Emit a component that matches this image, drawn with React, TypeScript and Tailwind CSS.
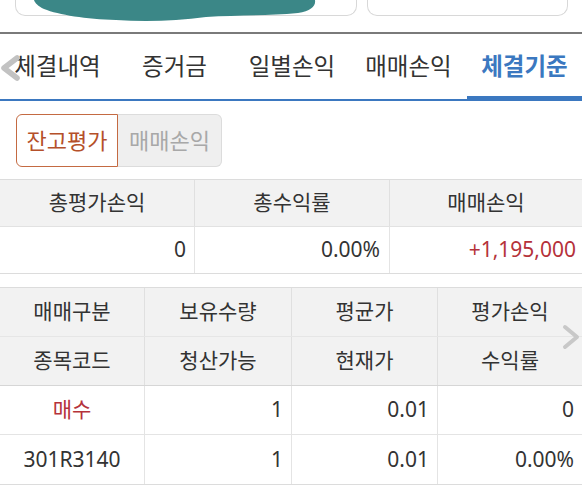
const FONT = { fontFamily: '"Noto Sans", "Noto Sans CJK KR", sans-serif' };

const tabs = [
  { label: '체결내역', w: 'w-[115px]' },
  { label: '증거금', w: 'w-[119px]' },
  { label: '일별손익', w: 'w-[116px]' },
  { label: '매매손익', w: 'w-[117px]' },
  { label: '체결기준', w: 'w-[115px]', active: true },
];

const cols2 = ['w-[145px]', 'w-[147px]', 'w-[146px]', 'flex-1'];

export default function App() {
  return (
    <div className="w-[582px] h-[487px] bg-white overflow-hidden text-[#333]" style={FONT}>
      {/* Top cards (cut off) */}
      <div className="h-[34px] border-b-2 border-[#7a7a7a] flex pl-[15px] gap-[10px]">
        <div className="relative w-[342px] h-[16px] border border-t-0 border-[#d8d8d8] rounded-b-[10px]">
          <svg className="absolute left-[18px] top-0" width="282" height="23" viewBox="0 0 282 23">
            <path
              d="M0 0 H281 C282 6 277 11 264 13 C232 16 202 15 172 17 C142 21 112 22 82 20 C52 19 25 15 10 9 C4 6 1 3 0 0 Z"
              fill="#3b8787"
            />
          </svg>
        </div>
        <div className="w-[201px] h-[16px] border border-t-0 border-[#d8d8d8] rounded-b-[10px]" />
      </div>

      {/* Tabs */}
      <div className="relative flex h-[67px] border-b-2 border-[#3b78c0]">
        {tabs.map((t) => (
          <div
            key={t.label}
            className={`${t.w} relative flex items-center justify-center text-[23.5px] ${
              t.active ? 'text-[#3b78c0] font-bold' : 'text-[#333]'
            }`}
          >
            <span className="relative">{t.label}</span>
            {t.active && <div className="absolute left-0 right-0 bottom-0 h-[3px] bg-[#3b78c0]" />}
          </div>
        ))}
        <svg className="absolute left-0 top-[21px]" width="22" height="26" viewBox="0 0 22 26">
          <polyline points="17,3 4,13 17,23" fill="none" stroke="#c2c2c2" strokeWidth="5.5" strokeLinecap="round" strokeLinejoin="round" />
        </svg>
      </div>

      {/* Toggle */}
      <div className="flex pl-[16px] pt-[13px]">
        <div className="w-[102px] h-[53px] flex items-center justify-center border border-[#c46a42] rounded-l-[6px] bg-white text-[#b5502a] text-[22px]">
          잔고평가
        </div>
        <div className="w-[104px] h-[53px] flex items-center justify-center border border-l-0 border-[#dcdcdc] rounded-r-[6px] bg-[#efefef] text-[#a8a8a8] text-[22px]">
          매매손익
        </div>
      </div>

      {/* Summary table */}
      <div className="mt-[12px] border-t border-b border-[#dcdcdc] text-[21px]">
        <div className="flex h-[47px] bg-[#f2f2f2] border-b border-[#e2e2e2]">
          <div className="w-[195px] flex items-center justify-center border-r border-[#e0e0e0]">총평가손익</div>
          <div className="w-[195px] flex items-center justify-center border-r border-[#e0e0e0]">총수익률</div>
          <div className="flex-1 flex items-center justify-center">매매손익</div>
        </div>
        <div className="flex h-[46px]">
          <div className="w-[195px] flex items-center justify-end pr-[8px] border-r border-[#e4e4e4]">0</div>
          <div className="w-[195px] flex items-center justify-end pr-[9px] border-r border-[#e4e4e4]">0.00%</div>
          <div className="flex-1 flex items-center justify-end pr-[6px] text-[#b5323a]">+1,195,000</div>
        </div>
      </div>

      {/* Positions table */}
      <div className="relative mt-[13px] border-t border-b border-[#dcdcdc] text-[21px]">
        {[
          ['매매구분', '보유수량', '평균가', '평가손익'],
          ['종목코드', '청산가능', '현재가', '수익률'],
        ].map((row, ri) => (
          <div key={ri} className={`flex h-[49px] bg-[#f2f2f2] border-b ${ri === 0 ? 'border-[#e6e6e6]' : 'border-[#d6d6d6]'}`}>
            {row.map((c, i) => (
              <div
                key={c}
                className={`${cols2[i]} flex items-center justify-center ${i < 3 ? 'border-r border-[#e0e0e0]' : ''}`}
              >
                {c}
              </div>
            ))}
          </div>
        ))}
        {[
          [{ v: '매수', center: true, red: true }, { v: '1' }, { v: '0.01' }, { v: '0' }],
          [{ v: '301R3140', center: true }, { v: '1' }, { v: '0.01' }, { v: '0.00%' }],
        ].map((row, ri) => (
          <div key={ri} className={`flex h-[49px] ${ri === 0 ? 'border-b border-[#e4e4e4]' : ''}`}>
            {row.map((c, i) => (
              <div
                key={i}
                className={`${cols2[i]} flex items-center ${c.center ? 'justify-center' : 'justify-end pr-[8px]'} ${
                  c.red ? 'text-[#b5323a]' : ''
                } ${i < 3 ? 'border-r border-[#e4e4e4]' : ''}`}
              >
                {c.v}
              </div>
            ))}
          </div>
        ))}
        <svg className="absolute right-0 top-[36px]" width="22" height="26" viewBox="0 0 22 26">
          <polyline points="5,3 17,13 5,23" fill="none" stroke="#c8c8c8" strokeWidth="4" strokeLinecap="round" strokeLinejoin="round" />
        </svg>
      </div>
    </div>
  );
}
